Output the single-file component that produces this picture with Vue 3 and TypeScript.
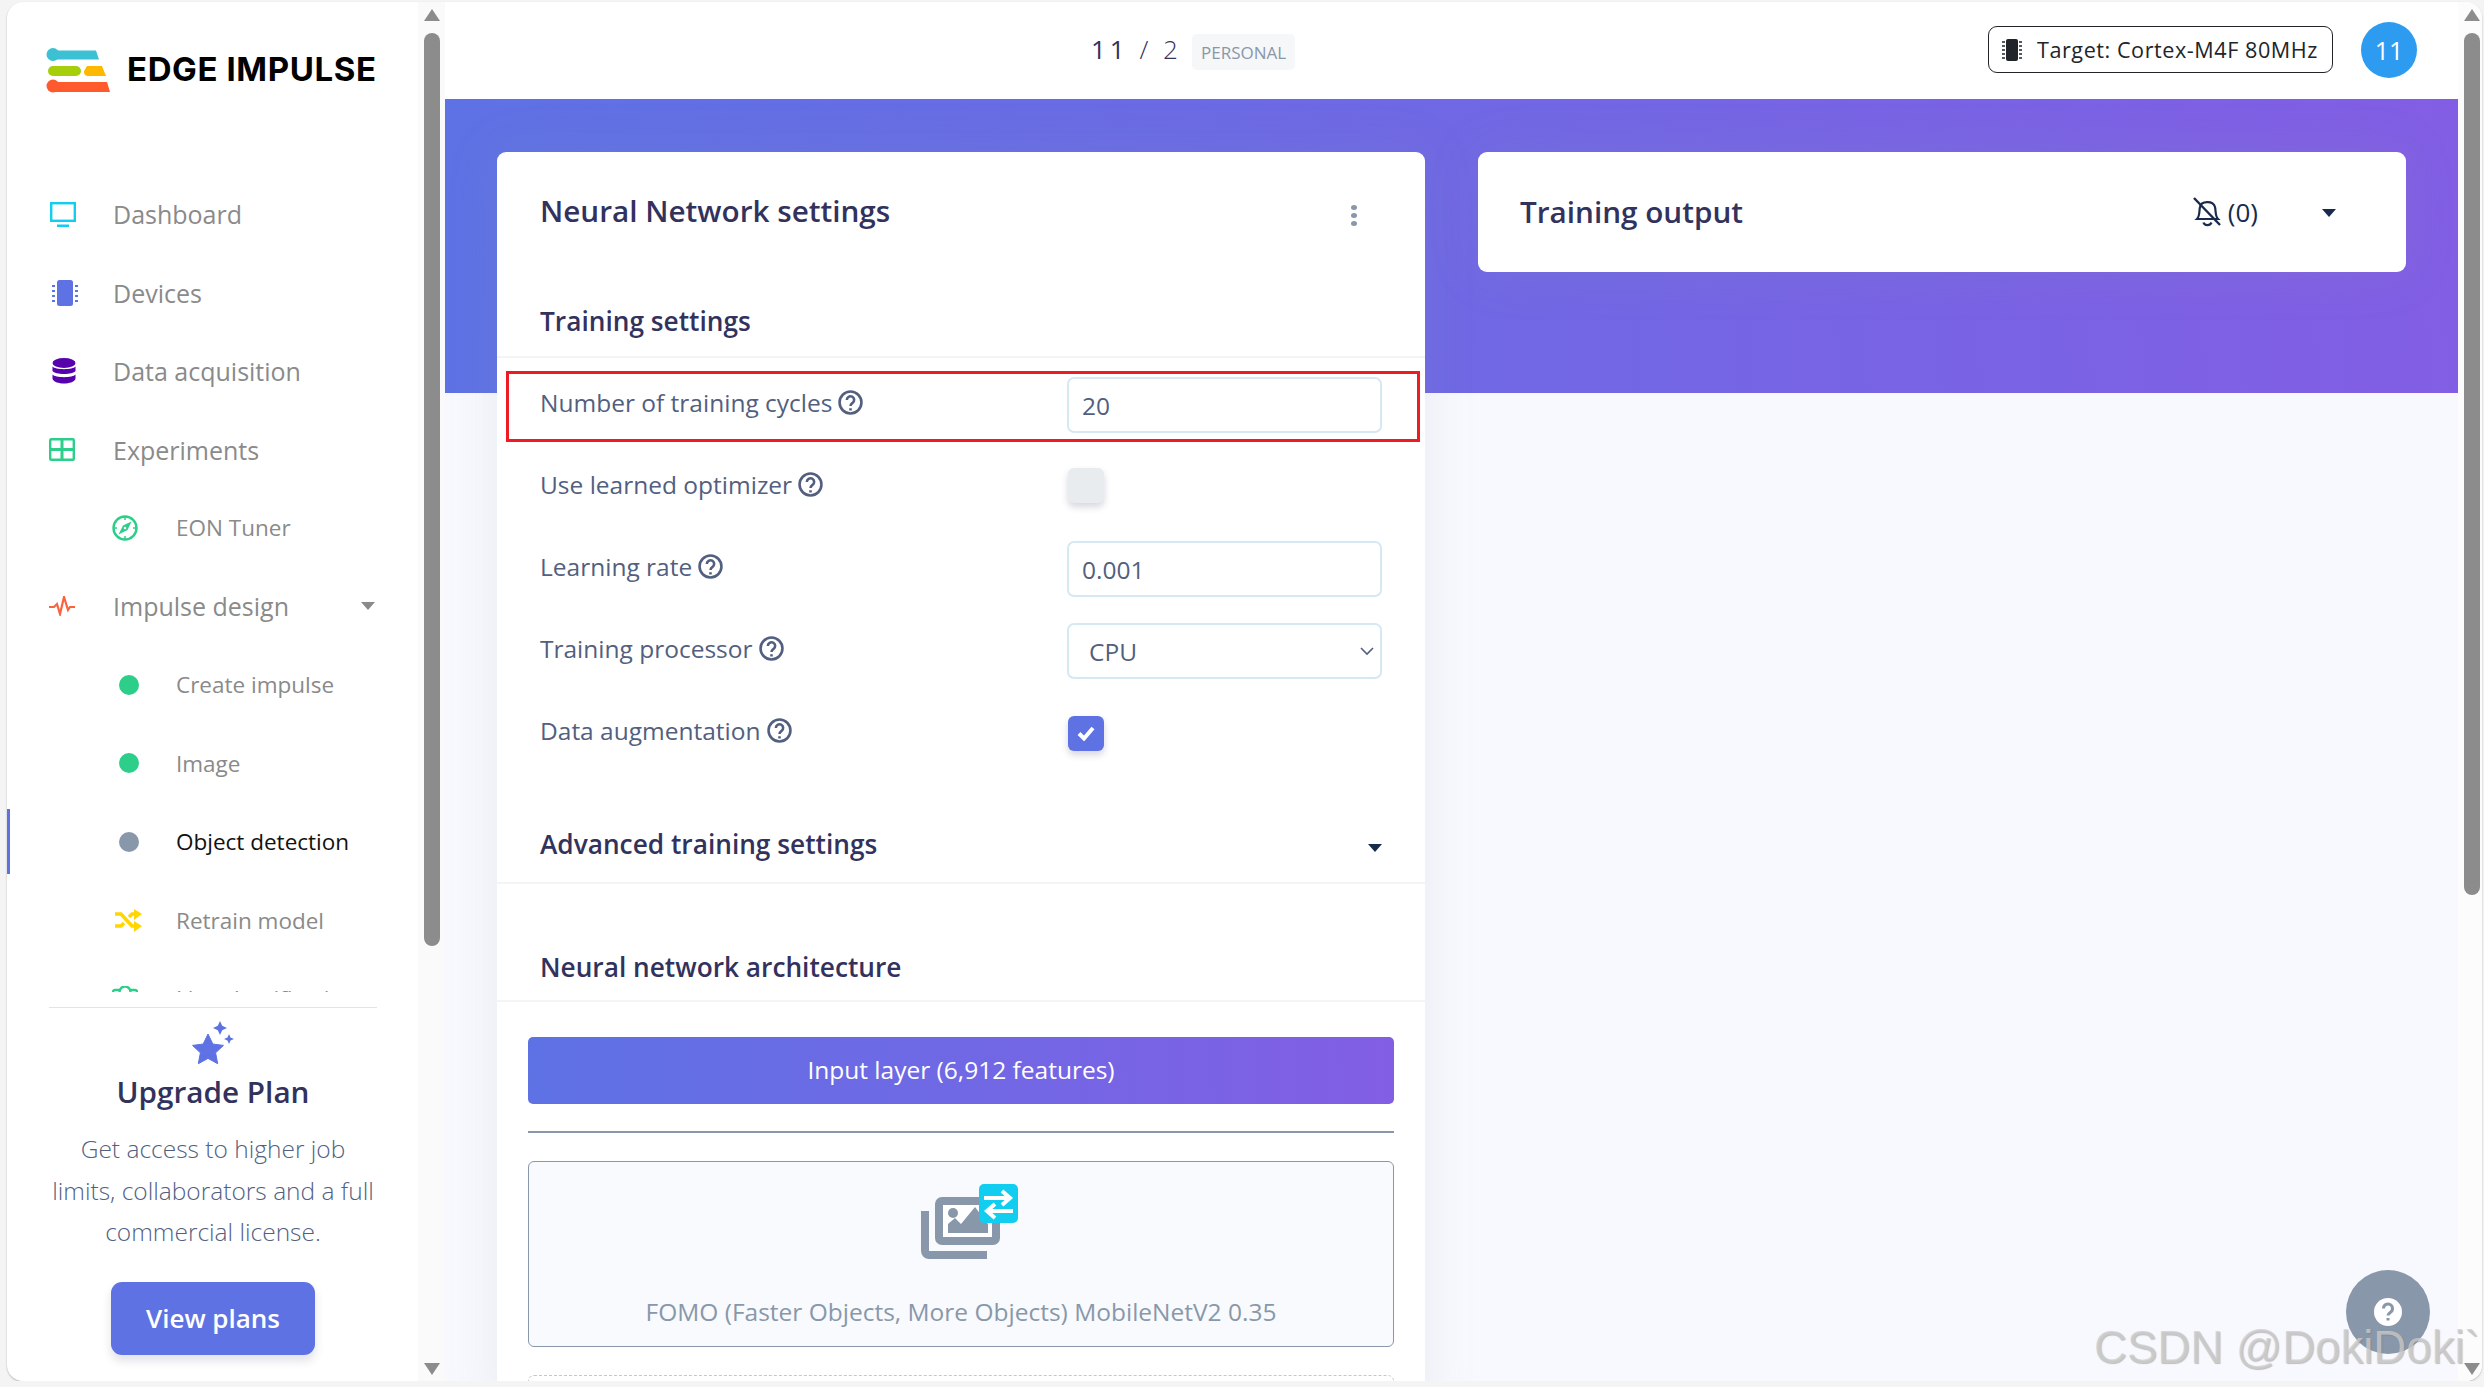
<script setup lang="ts">
type NavItem = { label: string, icon: string, sub?: boolean, active?: boolean, caret?: boolean }

const navItems: NavItem[] = [
  { label: "Dashboard", icon: "monitor" },
  { label: "Devices", icon: "chip" },
  { label: "Data acquisition", icon: "db" },
  { label: "Experiments", icon: "table" },
  { label: "EON Tuner", icon: "compass", sub: true },
  { label: "Impulse design", icon: "pulse", caret: true },
  { label: "Create impulse", icon: "dot-green", sub: true },
  { label: "Image", icon: "dot-green", sub: true },
  { label: "Object detection", icon: "dot-grey", sub: true, active: true },
  { label: "Retrain model", icon: "shuffle", sub: true },
  { label: "Live classification", icon: "live", sub: true },
]
</script>

<template>
  <div class="app">
    <aside class="sidebar">
      <div class="brand">
        <svg class="logo" width="64" height="46" viewBox="0 0 64 46">
          <circle cx="7" cy="7.5" r="6.5" fill="#3bc1d3" />
          <path d="M7 3.5h43l3 9H7z" fill="#3bc1d3" />
          <rect x="2" y="19" width="33" height="10" rx="5" fill="#a6ce0a" />
          <path d="M41 19h15l4 10H42a4 4 0 0 1-4-5z" fill="#ffb800" />
          <circle cx="7" cy="39" r="6.5" fill="#ff5a2d" />
          <path d="M7 35h54l3 10H7z" fill="#ff5a2d" />
        </svg>
        <span class="brand-name">EDGE IMPULSE</span>
      </div>

      <nav class="nav">
        <div
          v-for="item in navItems"
          :key="item.label"
          class="nav-row"
          :class="{ sub: item.sub, active: item.active }"
        >
          <span class="nav-icon">
            <svg v-if="item.icon === 'monitor'" class="nudge-1" width="26" height="25" viewBox="0 0 26 25">
              <rect x="1.2" y="1.2" width="23.6" height="17.6" fill="none" stroke="#11cdef" stroke-width="2.4" />
              <rect x="7" y="22.5" width="12" height="2.5" fill="#11cdef" />
            </svg>
            <svg v-else-if="item.icon === 'chip'" class="nudge-3" width="26" height="26" viewBox="0 0 26 26">
              <rect x="5" y="0" width="16" height="26" rx="2.5" fill="#5e72e4" />
              <path d="M0 6h3M0 11h3M0 16h3M0 21h3M23 6h3M23 11h3M23 16h3M23 21h3" stroke="#5e72e4" stroke-width="2" />
            </svg>
            <svg v-else-if="item.icon === 'db'" class="nudge-3" width="24" height="26" viewBox="0 0 24 26">
              <ellipse cx="12" cy="5" rx="11.5" ry="5" fill="#5603ad" />
              <path d="M.5 8.5C3 12 21 12 23.500 8.500V13C21 17 3 17 .5 13z" fill="#5603ad" />
              <path d="M.5 16.500C3 20 21 20 23.500 16.500V21C21 27 3 27 .5 21z" fill="#5603ad" />
            </svg>
            <svg v-else-if="item.icon === 'table'" width="26" height="23" viewBox="0 0 26 23">
              <rect x="1.2" y="1.2" width="23.600" height="20.600" rx="1" fill="#fff" stroke="#2dce89" stroke-width="2.400" />
              <path d="M13 1v21M1 11.500h24" stroke="#2dce89" stroke-width="3" />
            </svg>
            <svg v-else-if="item.icon === 'compass' " width="26" height="26" viewBox="0 0 26 26">
              <circle cx="13" cy="13" r="11.500" fill="none" stroke="#2dce89" stroke-width="2.400" />
              <path d="M13 1v4M13 21v4M1 13h4M21 13h4" stroke="#2dce89" stroke-width="1.500" />
              <path d="M19.500 6.500l-8.500 4-4.500 9 9-4.500z" fill="#2dce89" />
              <circle cx="13" cy="13" r="1.300" fill="#fff" />
            </svg>
            <svg v-else-if="item.icon === 'pulse'" width="26" height="20" viewBox="0 0 26 20">
              <path d="M0 11h5l3-3 3 10 4-17 4 13 2-3h5" fill="none" stroke="#fb6340" stroke-width="2.200" />
            </svg>
            <span v-else-if="item.icon === 'dot-green'" class="dot green" />
            <span v-else-if="item.icon === 'dot-grey'" class="dot grey" />
            <svg v-else-if="item.icon === 'shuffle'" class="nudge-3" width="27" height="23" viewBox="0 0 27 23">
              <path d="M0 5h6l11 12h4M0 17h6l3-3M14 8l3-3h4" fill="none" stroke="#ffd600" stroke-width="3.600" />
              <path d="M19 0l8 5-8 6zM19 12l8 5-8 6z" fill="#ffd600" />
            </svg>
            <svg v-else width="26" height="26" viewBox="0 0 26 26">
              <rect x="1" y="4" width="24" height="16" rx="2" fill="none" stroke="#2dce89" stroke-width="2.400" />
              <circle cx="13" cy="6" r="5.500" fill="#fff" stroke="#2dce89" stroke-width="2.400" />
            </svg>
          </span>
          <span class="nav-label">{{ item.label }}</span>
          <span v-if="item.caret" class="nav-caret" />
        </div>
      </nav>

      <div class="upgrade">
        <svg class="upgrade-star" width="44" height="44" viewBox="0 0 44 44">
          <path d="M16 13l4.800 10 10.700 1.400-7.900 7.400 2.100 10.900L16 37.400 6.300 42.700l2.100-10.900L.5 24.400 11.200 23z" fill="#5e72e4" stroke="#5e72e4" stroke-linejoin="round" />
          <path d="M28 0l2.200 4.800L35 7l-4.800 2.200L28 14l-2.200-4.800L21 7l4.800-2.200zM37 13l1.500 3.500L42 18l-3.500 1.500L37 23l-1.500-3.500L32 18l3.500-1.500z" fill="#5e72e4" />
        </svg>
        <h3>Upgrade Plan</h3>
        <p>Get access to higher job<br>limits, collaborators and a full<br>commercial license.</p>
        <button class="view-plans">View plans</button>
      </div>
    </aside>

    <div class="scrollbar side-scroll">
      <span class="arrow up" />
      <span class="thumb" />
      <span class="arrow down" />
    </div>

    <main class="main">
      <header class="topbar">
        <div class="project">
          <span class="project-name">11 <i>/ 2</i></span>
          <span class="tier">PERSONAL</span>
        </div>
        <button class="target">
          <svg width="20" height="24" viewBox="0 0 20 24">
            <rect x="4" y="1" width="12" height="22" rx="2" fill="#212529" />
            <path d="M0 4h3M0 8h3M0 12h3M0 16h3M0 20h3M17 4h3M17 8h3M17 12h3M17 16h3M17 20h3" stroke="#212529" stroke-width="1.500" />
          </svg>
          Target: Cortex-M4F 80MHz
        </button>
        <span class="avatar">11</span>
      </header>

      <div class="body">
        <section class="card settings">
          <div class="card-title">
            <h2>Neural Network settings</h2>
            <span class="kebab"><i /><i /><i /></span>
          </div>

          <h3 class="section-head training">Training settings</h3>

          <div class="form">
            <div class="form-row highlighted">
              <label>Number of training cycles
                <svg class="help" viewBox="0 0 24 24"><circle cx="12" cy="12" r="10.500" /><path d="M8.500 9.500a3.500 3.500 0 1 1 5.500 2.900c-1.400 1-2 1.600-2 3M12 17.500v2.200" /></svg>
              </label>
              <input class="field" value="20" />
            </div>
            <div class="form-row">
              <label>Use learned optimizer
                <svg class="help" viewBox="0 0 24 24"><circle cx="12" cy="12" r="10.500" /><path d="M8.500 9.500a3.500 3.500 0 1 1 5.500 2.900c-1.400 1-2 1.600-2 3M12 17.500v2.200" /></svg>
              </label>
              <span class="check" />
            </div>
            <div class="form-row">
              <label>Learning rate
                <svg class="help" viewBox="0 0 24 24"><circle cx="12" cy="12" r="10.500" /><path d="M8.500 9.500a3.500 3.500 0 1 1 5.500 2.900c-1.400 1-2 1.600-2 3M12 17.500v2.200" /></svg>
              </label>
              <input class="field" value="0.001" />
            </div>
            <div class="form-row">
              <label>Training processor
                <svg class="help" viewBox="0 0 24 24"><circle cx="12" cy="12" r="10.500" /><path d="M8.500 9.500a3.500 3.500 0 1 1 5.500 2.900c-1.400 1-2 1.600-2 3M12 17.500v2.200" /></svg>
              </label>
              <div class="select-wrap">
                <select class="field select"><option>CPU</option></select>
                <svg class="chevron" width="14" height="9" viewBox="0 0 14 9"><path d="M1 1l6 6 6-6" fill="none" stroke="#525f7f" stroke-width="1.600" /></svg>
              </div>
            </div>
            <div class="form-row">
              <label>Data augmentation
                <svg class="help" viewBox="0 0 24 24"><circle cx="12" cy="12" r="10.500" /><path d="M8.500 9.500a3.500 3.500 0 1 1 5.500 2.900c-1.400 1-2 1.600-2 3M12 17.500v2.200" /></svg>
              </label>
              <span class="check on">
                <svg width="20" height="16" viewBox="0 0 20 16"><path d="M3 8.500l5 5L17 3" fill="none" stroke="#fff" stroke-width="4" /></svg>
              </span>
            </div>
          </div>

          <h3 class="section-head advanced">Advanced training settings<span class="caret" /></h3>
          <h3 class="section-head arch">Neural network architecture</h3>

          <div class="layers">
            <div class="input-layer">Input layer (6,912 features)</div>
            <hr />
            <div class="layer-box">
              <svg class="fomo" width="98" height="75" viewBox="0 0 98 75">
                <path d="M4 27v40a4 4 0 0 0 4 4h58" fill="none" stroke="#8898aa" stroke-width="8" />
                <rect x="18" y="17" width="57" height="40" rx="3" fill="#fff" stroke="#8898aa" stroke-width="8" />
                <path d="M27 49V40l7-6 6 6 14-17 13 17v9z" fill="#8898aa" />
                <circle cx="32" cy="29" r="5" fill="#8898aa" />
                <rect x="58" y="0" width="39" height="39" rx="5" fill="#11cdef" />
                <path d="M63 14h24M81 7l8 7-8 7M92 27H68M74 20l-8 7 8 7" fill="none" stroke="#fff" stroke-width="4" />
              </svg>
              <span>FOMO (Faster Objects, More Objects) MobileNetV2 0.35</span>
            </div>
            <div class="layer-add" />
          </div>
        </section>

        <section class="card output">
          <h2>Training output</h2>
          <svg class="bell" width="30" height="30" viewBox="0 0 30 30">
            <path d="M5 22c3-3 2-8 3-12 1-6 13-7 15 0 1 4 0 9 3 12zM11.500 25.500c1 3.500 6.500 3.500 8 0" fill="none" stroke="#172b4d" stroke-width="2.200" />
            <path d="M2 1l26 27" stroke="#172b4d" stroke-width="2.400" />
          </svg>
          <span class="count">(0)</span>
          <span class="caret" />
        </section>
      </div>

      <button class="fab">
        <svg width="30" height="30" viewBox="0 0 30 30">
          <circle cx="15" cy="15" r="14" fill="#fff" />
          <path d="M10.500 11.500a4.500 4.500 0 1 1 7 3.700c-1.800 1.200-2.500 1.800-2.500 3.300M15 21v2.600" fill="none" stroke="#8898aa" stroke-width="3" />
        </svg>
      </button>
    </main>

    <div class="scrollbar main-scroll">
      <span class="arrow up" />
      <span class="thumb" />
      <span class="arrow down" />
    </div>

    <span class="watermark">CSDN @DokiDoki`</span>
  </div>
</template>

<style scoped>
.app {
  position: relative;
  display: flex;
  width: 2475px;
  height: 1379px;
  margin: 2px 0 0 7px;
  border-radius: 16px;
  overflow: hidden;
  background: #fff;
  box-shadow: 0 1px 2px rgba(0, 0, 0, .25);
  font-family: "Open Sans", "Liberation Sans", sans-serif;
  color: #525f7f;
}

/* sidebar */
.sidebar {
  display: flex;
  flex-direction: column;
  width: 411px;
  flex: none;
}
.brand {
  display: flex;
  align-items: flex-start;
  height: 173px;
  flex: none;
  padding: 43px 0 0 39px;
  box-sizing: border-box;
}
.logo { flex: none; margin-top: 2px; }
.brand-name {
  margin: 1px 0 0 17px;
  font-family: Inter, "Liberation Sans", sans-serif;
  font-weight: 700;
  font-size: 33px;
  letter-spacing: .6px;
  line-height: 46px;
  color: #000;
  white-space: nowrap;
}
.nav {
  flex: 1;
  min-height: 0;
  overflow: hidden;
}
.nav-row {
  position: relative;
  display: flex;
  align-items: center;
  height: 78.45px;
  padding-left: 42px;
  color: #8a8a8a;
  font-size: 25px;
}
.nav-icon {
  display: flex;
  align-items: center;
  width: 64px;
  flex: none;
}
.nudge-1 { margin-left: 1px; }
.nudge-3 { margin-left: 3px; }
.nav-row.sub {
  padding-left: 105px;
  font-size: 22.500px;
}
.nav-row.active { color: #111; }
.nav-row.active::before {
  content: "";
  position: absolute;
  left: 0;
  top: 6px;
  width: 3px;
  height: 65px;
  background: #5e72e4;
}
.dot {
  width: 20px;
  height: 20px;
  margin-left: 7px;
  border-radius: 50%;
}
.dot.green { background: #2dce89; }
.dot.grey { background: #8898aa; }
.nav-caret {
  position: absolute;
  left: 354px;
  top: 35px;
  border-left: 7.500px solid transparent;
  border-right: 7.500px solid transparent;
  border-top: 8px solid #8a8a8a;
}
.upgrade {
  display: flex;
  flex-direction: column;
  align-items: center;
  height: 374px;
  flex: none;
  box-sizing: border-box;
  margin: 15px 41px 0 42px;
  padding-top: 13px;
  border-top: 1px solid #e4e4e4;
}
.upgrade-star { flex: none; margin-left: 1px; }
.upgrade h3 {
  margin: 4px 0 0;
  font-size: 29.700px;
  line-height: 46px;
  font-weight: 600;
  color: #32325d;
}
.upgrade p {
  margin: 13px 0 0;
  font-size: 24.500px;
  line-height: 41.500px;
  font-weight: 300;
  text-align: center;
  white-space: nowrap;
}
.view-plans {
  width: 204px;
  height: 73px;
  margin-top: 29px;
  flex: none;
  border: 0;
  border-radius: 11px;
  background: #5e72e4;
  box-shadow: 0 6px 10px rgba(50, 50, 93, .14);
  color: #fff;
  font: 600 26px "Open Sans", sans-serif;
}

/* fake scrollbars */
.scrollbar {
  display: flex;
  flex-direction: column;
  align-items: center;
  flex: none;
  box-sizing: border-box;
  background: #fafafa;
  padding: 7px 0 6px;
}
.side-scroll { width: 27px; }
.main-scroll { width: 24px; padding-left: 4px; background: #fcfcfc; }
.thumb {
  width: 16px;
  margin-top: 12px;
  border-radius: 8px;
  background: #8c8c8c;
}
.side-scroll .thumb { height: 913px; margin-bottom: auto; }
.main-scroll .thumb { height: 862px; margin-bottom: auto; }
.arrow {
  width: 0;
  height: 0;
  border-left: 8px solid transparent;
  border-right: 8px solid transparent;
}
.arrow.up { border-bottom: 12px solid #8c8c8c; }
.arrow.down { border-top: 12px solid #8c8c8c; }

/* main column */
.main {
  display: flex;
  flex-direction: column;
  flex: 1;
  min-width: 0;
  background: #f8f9fe;
}
.topbar {
  display: flex;
  align-items: center;
  height: 97px;
  flex: none;
  padding: 0 41px 0 646px;
  background: #fff;
}
.project {
  display: flex;
  align-items: center;
  margin-top: -3px;
}
.project-name {
  font-size: 26px;
  letter-spacing: 4px;
  color: #32325d;
  white-space: nowrap;
}
.project-name i {
  font-style: normal;
  font-weight: 300;
  letter-spacing: 4px;
}
.tier {
  margin: 5px 0 0 10px;
  padding: 0 9px;
  height: 36px;
  line-height: 37px;
  border-radius: 5px;
  background: #f6f7f8;
  color: #8898aa;
  font-size: 17px;
  font-weight: 500;
}
.target {
  display: flex;
  align-items: center;
  gap: 15px;
  width: 345px;
  height: 47px;
  margin: -2px 0 0 auto;
  padding: 0 13px;
  box-sizing: border-box;
  border: 1.500px solid #212529;
  border-radius: 9px;
  background: #fff;
  color: #212529;
  font: 500 21.600px "Open Sans", sans-serif;
  letter-spacing: .55px;
  white-space: nowrap;
}
.avatar {
  display: flex;
  align-items: center;
  justify-content: center;
  width: 56px;
  height: 56px;
  margin: -2px 0 0 28px;
  border-radius: 50%;
  background: #2d9cf0;
  color: #fff;
  font-size: 25px;
}
.body {
  display: grid;
  grid-template-columns: 928px 928px;
  column-gap: 53px;
  align-items: start;
  flex: 1;
  min-height: 0;
  overflow: hidden;
  padding: 53px 0 0 52px;
  background: linear-gradient(87deg, #5e72e4, #825ee4) 0 0 / 100% 294px no-repeat;
}
.card {
  border-radius: 9px;
  background: #fff;
  box-shadow: 0 0 51px rgba(136, 152, 170, .15);
}
.card h2 {
  margin: 0;
  font-size: 29.700px;
  line-height: 46px;
  font-weight: 600;
  color: #32325d;
}
.card-title {
  display: flex;
  justify-content: space-between;
  height: 134px;
  box-sizing: border-box;
  padding: 36px 0 0 43px;
}
.kebab {
  display: flex;
  flex-direction: column;
  gap: 3px;
  margin: 17px 68px 0 0;
}
.kebab i {
  width: 6px;
  height: 5px;
  border-radius: 50%;
  background: #8898aa;
}
.section-head {
  display: flex;
  align-items: center;
  margin: 0;
  box-sizing: border-box;
  padding-left: 43px;
  border-bottom: 2px solid #f3f4f6;
  font-size: 26.250px;
  font-weight: 600;
  color: #32325d;
}
.section-head.training { height: 72px; }
.section-head.advanced { height: 78px; margin-top: 45px; position: relative; }
.section-head.advanced .caret { position: absolute; left: 871px; top: 38px; }
.section-head.arch { height: 68px; margin-top: 50px; }
.form {
  display: flex;
  flex-direction: column;
  gap: 26px;
  padding: 19px 44px 0 43px;
}
.form-row {
  position: relative;
  display: flex;
  align-items: center;
  height: 56px;
}
.form-row label {
  display: flex;
  align-items: center;
  gap: 6px;
  width: 527px;
  flex: none;
  font-size: 24.500px;
  margin-top: -5px;
  white-space: nowrap;
}
.highlighted::after {
  content: "";
  position: absolute;
  left: -34px;
  right: -39px;
  top: -6px;
  bottom: -9px;
  border: 3px solid #ed1c24;
  pointer-events: none;
}
.help {
  width: 25px;
  height: 25px;
  flex: none;
  fill: none;
  stroke: #525f7f;
  stroke-width: 2.500;
}
.field {
  display: block;
  width: 315px;
  height: 56px;
  box-sizing: border-box;
  padding: 0 13px;
  border: 2px solid #d5e8f3;
  border-radius: 7px;
  background: #fff;
  color: #525f7f;
  font: 24.500px "Open Sans", sans-serif;
  outline: none;
}
.select-wrap { position: relative; }
.select {
  appearance: none;
  padding-left: 20px;
}
.chevron {
  position: absolute;
  right: 8px;
  top: 24px;
}
.check {
  display: flex;
  align-items: center;
  justify-content: center;
  width: 36px;
  height: 35px;
  margin: -3px 0 0 1px;
  border-radius: 6px;
  background: #e9ecef;
  box-shadow: 0 4px 7px rgba(50, 50, 93, .2);
}
.check.on { background: #5e72e4; margin-top: 0; }
.caret {
  display: inline-block;
  border-left: 7.500px solid transparent;
  border-right: 7.500px solid transparent;
  border-top: 8.500px solid #172b4d;
}
.layers {
  display: flex;
  flex-direction: column;
  padding: 35px 31px 0;
}
.input-layer {
  height: 67px;
  line-height: 65px;
  border-radius: 5px;
  background: linear-gradient(87deg, #5e72e4, #825ee4);
  color: #fff;
  text-align: center;
  font-size: 24.500px;
}
.layers hr {
  width: 100%;
  height: 2px;
  margin: 27px 0 28px;
  border: 0;
  background: #8898aa;
}
.layer-box {
  display: flex;
  flex-direction: column;
  align-items: center;
  height: 186px;
  box-sizing: border-box;
  padding-top: 22px;
  border: 1.500px solid #8898aa;
  border-radius: 6px;
  background: #f8fafd;
  color: #8898aa;
  font-size: 24.500px;
}
.layer-box span { margin-top: 36px; line-height: 33px; }
.fomo { margin-left: 18px; flex: none; }
.layer-add {
  height: 40px;
  margin-top: 28px;
  border: 1.500px dashed #c4c8ce;
  border-radius: 6px;
}
.output {
  display: flex;
  align-items: center;
  height: 120px;
  box-sizing: border-box;
  padding: 0 42px;
}
.output h2 { flex: 1; }
.bell { margin-right: 6px; }
.count {
  margin-right: 64px;
  font-size: 26px;
  font-weight: 500;
  color: #172b4d;
}
.output .caret { margin-right: 28px; margin-top: 2px; }
.fab {
  position: absolute;
  left: 2339px;
  top: 1268px;
  display: flex;
  align-items: center;
  justify-content: center;
  width: 84px;
  height: 84px;
  padding: 0;
  border: 0;
  border-radius: 50%;
  background: #8898aa;
}
.watermark {
  position: absolute;
  left: 2087px;
  top: 1320px;
  font: 45.600px "Liberation Sans", sans-serif;
  line-height: 52px;
  color: rgba(205, 205, 205, .75);
  text-shadow: 1px 1px 1px rgba(120, 120, 120, .45);
  white-space: nowrap;
}
</style>

<style>
html, body {
  margin: 0;
  background: #f4f4f4;
  overflow: hidden;
}
</style>
